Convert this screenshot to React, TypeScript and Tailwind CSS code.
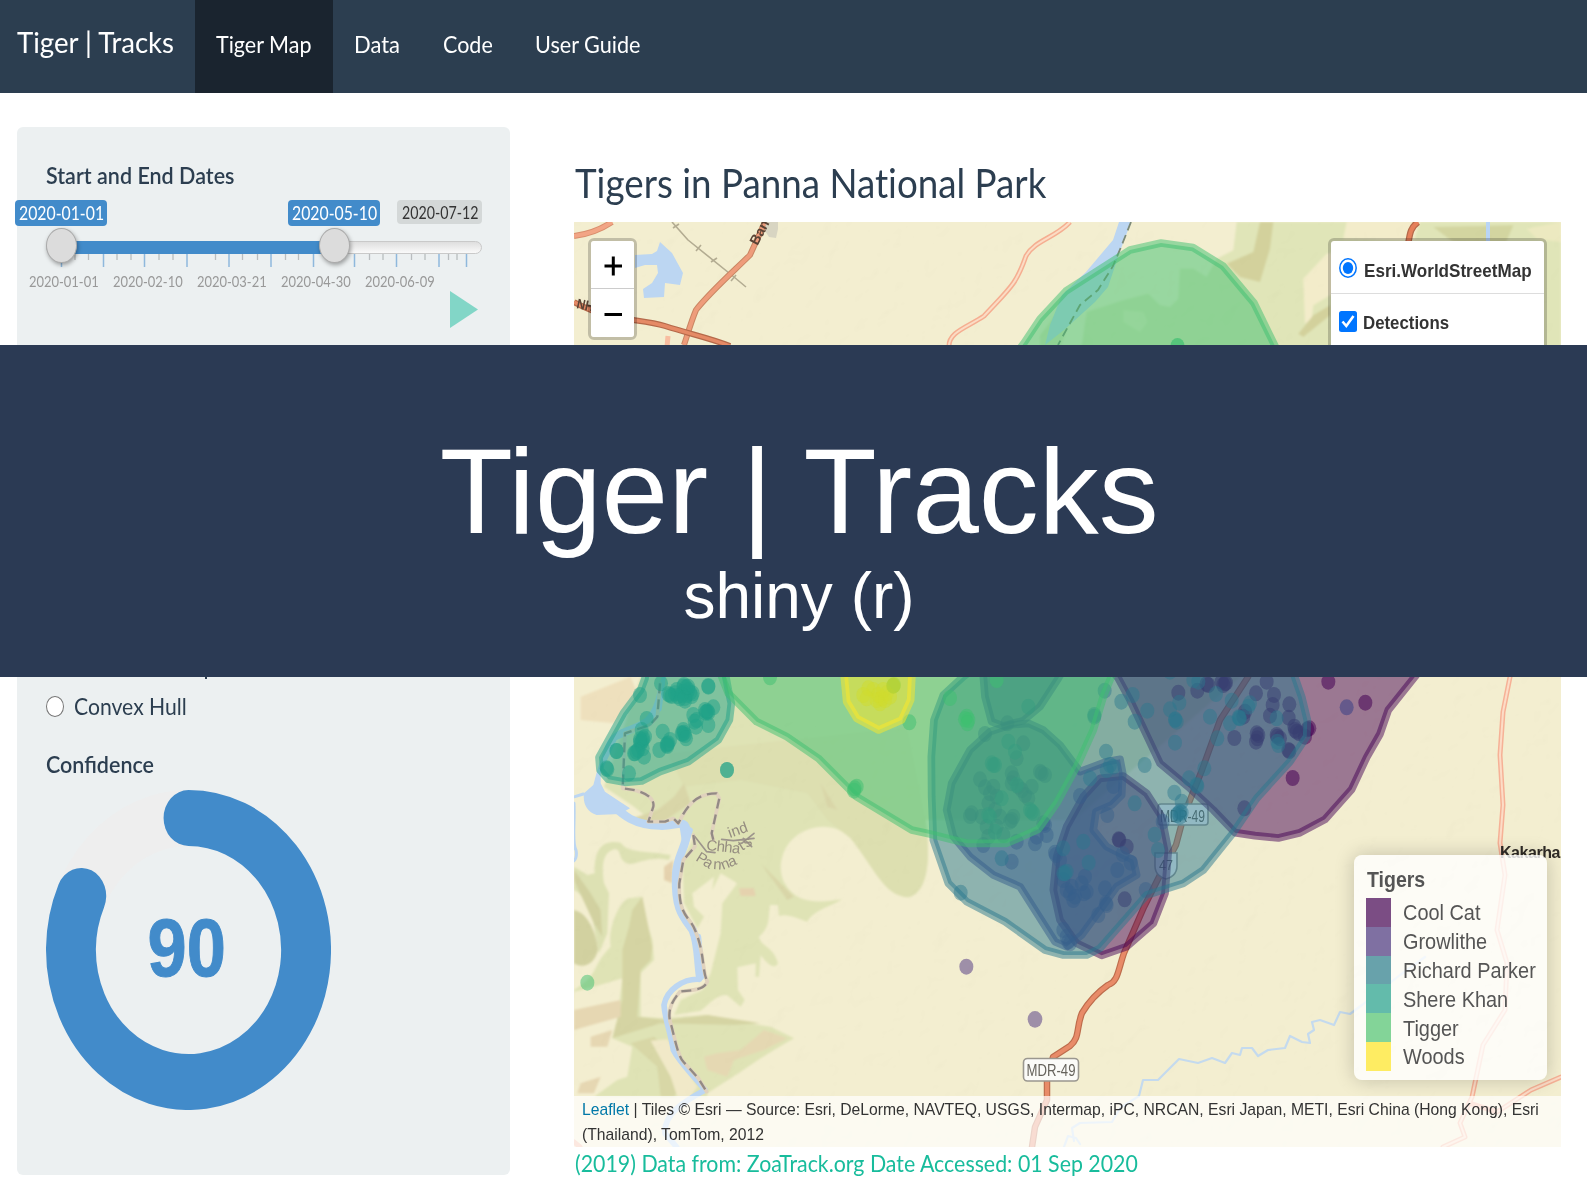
import React from "react";

const COOL = "#440154";
const GROW = "#414487";
const PARKER = "#2a788e";
const SHERE = "#1fa187";
const TIGGER = "#3dbf70";
const WOODS = "#fde725";

/* Narrowed text used across the dashboard */
function T({ children, className = "scale-x-[0.918]" }: { children: React.ReactNode; className?: string }) {
  return <span className={"inline-block origin-left whitespace-nowrap " + className}>{children}</span>;
}

function Zone({ c, pts }: { c: string; pts: string }) {
  return (
    <polygon
      points={pts}
      fill={c}
      fillOpacity={0.5}
      stroke={c}
      strokeOpacity={0.5}
      strokeWidth={23}
      strokeLinejoin="round"
    />
  );
}

function Dots({ c, pts, o = 0.5 }: { c: string; pts: number[][]; o?: number }) {
  return (
    <g fill={c} fillOpacity={o}>
      {pts.map(([x, y], i) => (
        <ellipse key={i} cx={x} cy={y} rx={21} ry={24} />
      ))}
    </g>
  );
}

const shereDots = [
  [-780, 75], [-717, 40], [-575, 48], [-575, 50], [-690, 75], [-670, 60], [-650, 50], [-640, 75], [-635, 60], [-660, 85], [-625, 78], [-645, 92], [-648, 45], [-685, 78], [-622, 70],
  [-675, 70], [-650, 65], [-630, 68], [-655, 75], [-642, 52], [-668, 78], [-646, 84], [-695, 72], [-636, 50],
  [-560, 112], [-580, 125], [-575, 128], [-585, 120], [-577, 124], [-583, 128], [-575, 165], [-620, 135], [-610, 150], [-650, 180], [-645, 195], [-655, 190], [-648, 188], [-652, 192], [-612, 170], [-642, 205], [-616, 155], [-712, 185], [-690, 210], [-700, 225], [-695, 220], [-698, 228], [-722, 240], [-698, 222],
  [-760, 147], [-775, 180], [-770, 205], [-780, 215], [-775, 215], [-772, 210], [-778, 222], [-795, 250], [-798, 250], [-785, 240], [-772, 235], [-768, 260], [-765, 200], [-780, 208], [-790, 245], [-850, 243], [-851, 243], [-880, 295], [-878, 298], [-813, 310], [-519, 300], [-519, 300],
];
const tiggerDots = [
  [-390, 22], [-136, 355], [-130, 350], [-138, 362], [28, 157], [200, 140], [205, 150], [195, 148], [202, 160], [150, 84], [290, 30], [-18, 45],
];
const parkerDots = [
  [583, 135], [583, 140], [614, 62], [618, 245], [664, 95], [698, 75], [704, 155], [742, 122], [734, 285], [570, 325], [630, 285], [640, 290], [620, 300], [825, 218], [825, 150], [826, 148], [830, 155], [810, 118], [838, 98],
  [867, 325], [890, 345], [892, 348], [823, 368], [845, 395], [840, 425], [835, 430], [830, 435], [845, 428], [840, 440], [704, 400], [764, 494], [774, 540], [182, 668], [913, 295], [952, 205], [930, 140],
  [948, 72], [995, 92], [990, 160], [1016, 142], [1020, 145], [1018, 144], [1045, 110], [1050, 100], [880, 30], [895, 35], [1130, 145], [1132, 215], [1135, 225], [810, 5], [490, 535], [550, 515], [566, 578], [305, 565], [385, 110],
  [325, 215], [345, 245], [285, 285], [275, 280], [280, 285], [390, 420], [395, 425], [400, 430], [265, 435], [270, 440], [350, 345], [305, 385], [285, 485], [490, 610], [495, 610], [500, 605],
];
const growDots = [
  [255, 192], [322, 160], [370, 220], [350, 265], [240, 328], [335, 310], [340, 325], [420, 305], [425, 310], [435, 315], [255, 352], [270, 370], [355, 350], [395, 350], [375, 375], [385, 385], [335, 340],
  [215, 430], [210, 438], [265, 400], [245, 440], [285, 420], [340, 440], [330, 455], [335, 450], [290, 470], [310, 495], [265, 500], [250, 525], [350, 515], [410, 500], [405, 520], [440, 495], [435, 465], [335, 575], [430, 460],
  [290, 380], [300, 440], [280, 350], [260, 470], [365, 360], [540, 378], [640, 348], [622, 435], [465, 548], [468, 555], [480, 570], [555, 620], [560, 665], [525, 680], [520, 690], [500, 660], [515, 650], [510, 670], [552, 670], [490, 630], [545, 640],
  [652, 600], [692, 578], [668, 552], [615, 655], [620, 705], [595, 735], [618, 700], [737, 660], [490, 780], [505, 815], [510, 820], [500, 800], [788, 455],
];
const coolDots = [
  [656, 508], [658, 510], [680, 530], [674, 688], [835, 68], [892, 62], [920, 42], [925, 45], [975, 40], [970, 45], [965, 35], [978, 38], [1003, 204], [1068, 70], [1122, 75], [1118, 105], [1100, 35], [1168, 103], [1110, 137], [1166, 143],
  [1030, 140], [1035, 125], [1070, 190], [1072, 205], [1075, 195], [1068, 215], [1130, 195], [1140, 205], [1132, 200], [1183, 170], [1190, 185], [1198, 190], [1185, 180], [1165, 240], [1168, 243], [1033, 415], [1228, 175], [1215, 200],
];

function MapArt() {
  return (
    <svg className="absolute inset-0 h-full w-full" viewBox="574 222 987 925" preserveAspectRatio="none">
      <defs>
        <filter id="soft" x="-10%" y="-10%" width="120%" height="120%">
          <feGaussianBlur stdDeviation="3" />
        </filter>
        <filter id="relief" x="0" y="0" width="100%" height="100%">
          <feTurbulence type="fractalNoise" baseFrequency="0.035" numOctaves="3" seed="4" result="n" />
          <feDiffuseLighting in="n" surfaceScale="1.6" lightingColor="#ffffff" diffuseConstant="1.35">
            <feDistantLight azimuth="225" elevation="48" />
          </feDiffuseLighting>
        </filter>
      </defs>
      <rect x="574" y="222" width="987" height="925" fill="#f3eed0" />

      {/* vegetation, north-east */}
      <g transform="translate(1060 222) scale(0.33333)" filter="url(#soft)">
        <path d="M530 0 L520 85 L470 110 L440 165 L400 140 L360 140 L355 230 L330 255 L300 250 L265 215 L190 235 L80 270 L65 370 L-60 380 L-60 340 L0 260 L60 200 L0 380 L1503 380 L1503 0 Z" fill="#e0e5b8" />
        <path d="M860 0 L1080 0 L1060 60 L830 90 L800 95 L730 170 L735 305 L755 290 L760 250 L810 220 L1200 200 L1200 60 L850 50 Z" fill="#f3ecca" />
        <path d="M600 0 L640 0 L630 80 L600 180 L540 165 L500 125 L580 90 Z M760 280 L810 250 L810 280 L730 345 L715 335 Z" fill="#d3d19c" />
        <path d="M1120 15 L1360 10 L1330 80 L1180 60 Z" fill="#d3d5a0" />
        <path d="M1400 20 L1503 0 L1503 60 L1430 50 Z" fill="#ece9c0" />
        <path d="M190 265 L250 270 L262 300 L240 330 L190 300 Z" fill="#ecebc4" />
      </g>

      {/* vegetation and relief, south */}
      <g transform="translate(574 760) scale(0.33333)" filter="url(#soft)">
        <path d="M200 -250 L2000 -250 L1500 180 L1055 180 C1070 290 1065 400 1000 412 C930 405 905 330 830 235 C770 170 650 200 625 290 C610 340 630 390 680 415 C720 430 760 425 805 418 C770 440 720 450 700 485 C670 475 640 460 615 468 L612 435 L588 435 C582 475 590 500 555 530 C560 560 600 560 612 610 C600 635 570 600 560 585 L555 650 L545 650 L545 610 L490 622 L492 690 L512 720 L500 740 L465 710 C440 690 400 740 380 752 L300 765 L320 720 L385 690 L410 640 L440 520 L445 430 L490 370 L440 340 L415 390 L420 350 L355 400 L360 440 L390 470 L370 505 L330 430 L325 300 L360 230 L300 180 L240 190 L180 140 L90 80 Z" fill="#dfe3b5" />
        <path d="M280 -20 L1000 -100 L1055 180 C1070 290 1065 400 1000 412 C930 405 905 330 830 235 L760 180 L700 100 L500 60 L330 80 Z" fill="#dddfb0" />
        <path d="M62 340 C60 260 90 240 140 248 C165 280 200 270 290 285 L285 300 C220 285 180 320 160 310 C130 300 145 265 120 268 C80 280 85 330 90 370 L105 400 L100 520 L75 580 L60 500 C50 430 20 400 0 390 L0 320 L40 345 Z" fill="#dde1b3" />
        <path d="M0 690 C80 640 50 620 110 560 C100 500 140 420 165 415 L205 410 L210 460 L235 540 L240 600 L200 640 L200 770 L265 775 L400 765 L520 790 L590 800 L660 835 L600 870 L560 895 L500 935 L400 1000 L400 1010 L60 1010 L130 960 L160 950 L175 860 L115 835 L130 780 L145 655 L60 680 L0 695 Z" fill="#dfe3b5" />
        <path d="M0 450 C50 460 70 540 72 570 C60 620 20 625 0 610 Z M0 330 L50 400 L80 450 L85 530 L60 490 L0 360 Z" fill="#d2d1a0" />
        <path d="M205 410 L235 560 L230 600 L200 630 L190 770 L280 780 L400 765 L560 790 L480 795 L260 790 L115 835 L145 720 L145 570 L165 500 L175 450 Z" fill="#d5d4a3" />
        <path d="M240 830 L290 880 L330 960 L300 1010 L260 1010 L250 920 L170 850 Z" fill="#d8d7a6" />
        <path d="M230 842 L280 838 L320 900 L370 980 L350 1010 L310 1010 L290 950 Z" fill="#f1e9c8" />
        <path d="M0 750 L140 720 L140 770 L0 810 Z M50 830 L115 810 L100 860 L50 860 Z M20 970 L80 950 L60 1000 L10 1000 Z" fill="#e6d7b2" />
        <path d="M390 890 L430 880 L500 870 L570 810 L640 835 L570 870 L480 900 L460 950 L400 930 Z" fill="#e5d8b2" />
        <path d="M270 320 L298 300 L295 370 L270 360 Z M495 385 L540 385 L545 408 L500 408 Z M200 180 L240 180 L240 200 L210 195 Z" fill="#e5d2ae" />
        <path d="M160 180 L250 150 L300 110 L330 70 L350 130 L260 190 Z M740 70 L790 150 L760 140 Z M560 310 L660 410 L640 420 Z" fill="#d9d6a8" />
        <path d="M20 -190 L170 -250 L190 -200 L120 -110 L20 -120 Z" fill="#eee0bd" />
      </g>
      <rect x="574" y="222" width="987" height="925" filter="url(#relief)" style={{ mixBlendMode: "multiply" }} opacity=".12" />

      {/* northern features */}
      <g fill="none" strokeLinejoin="round">
        <path d="M635 255 L652 254 L657 251 L660 242 L672 253 L683 273 L680 285 L665 283 L664 297 L644 298 L643 289 L652 283 L658 273 L657 265 L645 265 L635 268 Z" fill="#bcd6f2" />
        <path d="M1119 222 L1131 222 L1119 254 L1108 287 L1095 302 L1064 330 L1045 345 L1050 325 L1062 295 L1086 272 L1113 240 Z" fill="#bcd6f2" />
        <path d="M1131 222 L1121 247 L1113 266 L1098 290 L1080 305 L1058 345" stroke="#7d8a78" strokeWidth="1.8" strokeDasharray="9 5" />
        <path d="M672 222 L688 240 L734 277 L746 287" stroke="#b3ac92" strokeWidth="1.6" />
        <path d="M673 228 l6 -4 M696 251 l5 -6 M711 262 l6 -4 M731 281 l5 -6" stroke="#b3ac92" strokeWidth="1.6" />
        <path d="M574 236 C590 234 600 230 612 222" stroke="#d98e6c" strokeWidth="6" />
        <path d="M574 236 C590 234 600 230 612 222" stroke="#f2a585" strokeWidth="4" />
        <path d="M765 222 L750 255 C735 270 710 292 696 310 C691 322 688 333 684 345" stroke="#c98663" strokeWidth="6" />
        <path d="M765 222 L750 255 C735 270 710 292 696 310 C691 322 688 333 684 345" stroke="#ee9c7b" strokeWidth="4" />
        <path d="M574 302 C610 322 640 318 665 326 C690 334 710 338 730 346" stroke="#b5694a" strokeWidth="6" />
        <path d="M574 302 C610 322 640 318 665 326 C690 334 710 338 730 346" stroke="#e58a66" strokeWidth="3.5" />
        <path d="M668 336 L667 347" stroke="#f8bda0" strokeWidth="5" />
        <path d="M1070 222 C1055 238 1035 240 1026 256 C1016 285 1010 288 984 316 C968 327 948 332 949 347" stroke="#f5ae91" strokeWidth="5" />
        <path d="M1070 222 C1055 238 1035 240 1026 256 C1016 285 1010 288 984 316 C968 327 948 332 949 347" stroke="#fbdcc4" strokeWidth="2" />
        <path d="M1418 222 C1411 227 1410 232 1408 245" stroke="#b5694a" strokeWidth="6.5" />
        <path d="M1418 222 C1411 227 1410 232 1408 245" stroke="#e5805a" strokeWidth="4" />
        <path d="M1488 222 V245" stroke="#b9d5f5" strokeWidth="4" />
      </g>
      <path d="M766 222 h12 v7 l-2 9 l-7 -1 l-4 -6 Z" fill="#d8d5c2" />
      <text transform="translate(757.5 246) rotate(-62)" fontFamily="Liberation Sans, sans-serif" fontWeight="700" fontSize="14" fill="#5a4335" textLength="26" lengthAdjust="spacingAndGlyphs">Ban</text>
      <text transform="translate(576 308) rotate(12)" fontFamily="Liberation Sans, sans-serif" fontWeight="700" fontSize="14" fill="#5a4335" textLength="17" lengthAdjust="spacingAndGlyphs">NH</text>

      {/* southern rivers, rail line and roads */}
      <g fill="none" strokeLinejoin="round" strokeLinecap="round">
        <g transform="translate(570 670) scale(0.33333)">
          <path d="M285 0 C255 60 265 105 225 145 C170 180 130 170 105 230 L82 300 L70 345 L42 370 C38 400 50 425 80 435 L150 432 L180 415 L150 395 L105 365 L92 340 L92 310 L140 210 L230 170 L275 120 L290 0 Z" fill="#bcd6f2" />
          <path d="M110 390 C150 425 180 465 270 467 C320 470 350 440 350 490 C350 530 318 560 318 620 C315 720 340 740 368 780 C385 820 382 860 390 920" stroke="#bcd6f2" strokeWidth="25" />
          <path d="M335 465 L362 480 L345 530 Z" fill="#bcd6f2" stroke="#bcd6f2" strokeWidth="14" />
          <path d="M385 800 C395 870 385 900 388 928 C340 925 290 960 282 1005 C285 1050 300 1080 310 1140 C330 1180 370 1215 405 1260 C350 1290 280 1330 285 1390 L320 1431" stroke="#bcd6f2" strokeWidth="17" />
          <path d="M15 380 L40 372 M12 400 C15 460 5 520 18 540 C22 560 15 570 12 572" stroke="#bcd6f2" strokeWidth="9" />
          <path d="M270 40 L262 140 L240 165 L165 190 L158 355 C215 360 255 380 250 410 L235 455 L285 455 L310 445 L325 460 C345 420 370 370 440 370 L448 385 L425 490 L430 510 M370 495 L375 530 L340 570 L328 640 C325 740 360 740 375 780 C405 850 395 900 412 935 C400 965 350 960 330 965 C300 1000 290 1030 305 1070 C315 1110 325 1160 340 1175 L385 1225 L410 1265" stroke="#e0d2bd" strokeWidth="11" />
          <path d="M270 40 L262 140 L240 165 L165 190 L158 355 C215 360 255 380 250 410 L235 455 L285 455 L310 445 L325 460 C345 420 370 370 440 370 L448 385 L425 490 L430 510 M370 495 L375 530 L340 570 L328 640 C325 740 360 740 375 780 C405 850 395 900 412 935 C400 965 350 960 330 965 C300 1000 290 1030 305 1070 C315 1110 325 1160 340 1175 L385 1225 L410 1265" stroke="#928a85" strokeWidth="7" strokeDasharray="30 18" strokeLinecap="butt" />
          <path d="M375 500 L410 545 L435 548 M455 508 L490 512 L552 505 M515 520 L552 490 M520 505 L545 530" stroke="#9d958c" strokeWidth="5" />
        </g>
        <path d="M1064 1147 L1068 1136 L1076 1138 L1080 1144 M1074 1141 L1072 1128 L1080 1123 L1112 1122 L1120 1108 L1139 1096 L1143 1080 L1158 1080 L1179 1059 L1198 1063 L1212 1058 L1225 1063 L1232 1053 L1240 1055 L1242 1048 L1252 1048 L1258 1056 L1268 1050 L1285 1048 L1290 1036 L1302 1042 L1310 1043 L1308 1034 L1314 1030 L1312 1022 L1320 1020 L1334 1025 L1340 1012 L1350 1014 L1362 1005 L1400 975 L1425 957" stroke="#c4daee" strokeWidth="2.2" />
        <g stroke="#f6b196" strokeWidth="5">
          <path d="M1510 677 L1503 712 L1500 755 L1503 805 L1500 843 L1505 875 L1497 930 L1507 963 L1505 1010 L1483 1045 L1472 1097 L1460 1123 L1465 1137 L1443 1147 M1561 1077 L1531 1090 L1497 1112 L1472 1104 M574 1142 L580 1147" />
        </g>
        <path d="M1510 677 L1503 712 L1500 755 L1503 805 L1500 843 L1505 875 L1497 930 L1507 963 L1505 1010 L1483 1045 L1472 1097 L1460 1123 L1465 1137 L1443 1147 M1561 1077 L1531 1090 L1497 1112" stroke="#fcdcc6" strokeWidth="2" />
        <path d="M1248 677 L1220 720 L1202 770 L1184 815 L1176 845 L1160 875 L1144 907 L1124 953 C1118 970 1118 982 1108 985 C1098 992 1088 1003 1082 1013 C1076 1028 1080 1038 1070 1046 L1053 1057 L1047 1080 L1047 1100 L1035 1127 L1032 1147" stroke="#bd6c4c" strokeWidth="6.5" />
        <path d="M1248 677 L1220 720 L1202 770 L1184 815 L1176 845 L1160 875 L1144 907 L1124 953 C1118 970 1118 982 1108 985 C1098 992 1088 1003 1082 1013 C1076 1028 1080 1038 1070 1046 L1053 1057 L1047 1080 L1047 1100 L1035 1127 L1032 1147" stroke="#e88b68" strokeWidth="4.2" />
      </g>

      {/* labels and shields */}
      <g fontFamily="Liberation Sans, sans-serif">
        <g fill="#958d80" fontSize="15">
          <text transform="translate(730 838) rotate(-20)" textLength="20">ind</text>
          <text transform="translate(706 850) rotate(6)" textLength="34">Chha</text>
          <text transform="translate(742 851) rotate(-32)" textLength="13">ts</text>
          <text transform="translate(695 860) rotate(32)" textLength="17">Pa</text>
          <text transform="translate(713 869) rotate(4)">n</text>
          <text transform="translate(723 870) rotate(-22)" textLength="16">na</text>
        </g>
        <text x="1500" y="857.5" fontSize="16" fontWeight="700" fill="#2f2b26" textLength="60.5">Kakarha</text>
        <g strokeWidth="1.6" stroke="#9a978f" fill="#fbfbf8">
          <rect x="1158" y="804" width="50" height="21" rx="3" />
          <rect x="1023.5" y="1058.5" width="55" height="22.5" rx="4" />
          <path d="M1155 853 h22 v13 c0 8 -6 12 -11 13 c-5 -1 -11 -5 -11 -13 Z" />
        </g>
        <g fill="#66635c" fontSize="16.5">
          <text x="1160" y="821.5" textLength="45" lengthAdjust="spacingAndGlyphs">MDR-49</text>
          <text x="1026.5" y="1076" textLength="49" lengthAdjust="spacingAndGlyphs">MDR-49</text>
          <text x="1159" y="870" fontSize="14" textLength="14" lengthAdjust="spacingAndGlyphs">47</text>
        </g>
      </g>

      {/* home ranges and detections */}
      <g transform="translate(900 670) scale(0.33333)">
        <Zone c={COOL} pts="600,-40 655,25 690,90 780,280 870,355 940,420 1005,488 1065,497 1135,504 1200,488 1275,448 1355,358 1400,262 1440,192 1465,120 1545,20 1590,-40" />
        <Zone c={COOL} pts="600,325 670,318 740,370 785,440 805,540 795,670 760,760 680,830 605,856 530,820 480,750 460,660 470,560 500,470 550,380" />
        <Dots c={COOL} pts={coolDots} />
        <Dots c={COOL} o={0.55} pts={[[1285, 35], [1396, 98], [1178, 324], [1222, 178]]} />
        <Dots c={GROW} o={0.6} pts={[[1340, 112]]} />
        <Zone c={GROW} pts="385,160 430,180 480,225 540,305 620,275 660,268 668,310 665,375 635,405 588,425 580,480 620,530 700,570 710,615 650,650 600,720 545,795 500,830 465,815 360,650 280,615 210,560 160,500 140,420 155,340 210,240 270,185 330,165" />
        <Zone c={GROW} pts="245,-40 255,80 275,155 310,168 370,152 420,110 475,25 520,-50" />
        <Dots c={GROW} pts={growDots} o={0.42} />
        <Zone c={PARKER} pts="260,-30 190,20 130,75 102,150 94,260 95,380 100,510 145,640 200,695 315,755 435,840 490,855 560,855 600,835 740,675 850,640 910,600 1000,488 1070,385 1170,275 1220,200 1222,150 1205,80 1170,-20" />
        <Dots c={PARKER} pts={parkerDots} o={0.45} />
        <Zone c={SHERE} pts="-760,-30 -765,25 -778,60 -830,130 -903,262 -900,300 -875,328 -825,337 -775,333 -720,305 -635,275 -545,210 -512,150 -506,100 -515,60 -530,-20" />
        <Dots c={SHERE} pts={shereDots} />
        <Zone c={TIGGER} pts="-545,-40 -535,20 -515,70 -430,155 -340,200 -245,265 -130,380 35,480 90,492 200,520 320,520 415,478 470,400 530,290 580,180 610,80 650,-20" />
        <Dots c={TIGGER} pts={tiggerDots} />
        <Zone c={WOODS} pts="-172,-30 -160,95 -130,145 -64,180 5,150 32,90 38,-30" />
        <Dots c="#d0dc2e" pts={[[-80, 60], [-70, 90], [-55, 85], [-40, 70], [-95, 55], [-60, 100], [-45, 90], [-110, 75], [-65, 75], [-30, 80], [-50, 60], [-100, 85]]} o={0.5} />
        <Dots c="#b4d234" pts={[[-20, 47]]} o={0.8} />
        <g fill="#49307f" fillOpacity=".5">
          <ellipse cx="199" cy="890" rx="21" ry="24" />
          <ellipse cx="405" cy="1048" rx="22" ry="25" />
        </g>
        <ellipse cx="-938" cy="938" rx="21" ry="24" fill={TIGGER} fillOpacity=".5" />
      </g>
      <polygon points="1000,375 1024,343 1040,319 1066,291 1130,250 1161,243 1193,247.5 1223,266 1254,303 1277,350 1280,380" fill={TIGGER} fillOpacity=".5" stroke={TIGGER} strokeOpacity=".5" strokeWidth="7.5" strokeLinejoin="round" />
      <ellipse cx="1177.5" cy="346" rx="7" ry="8" fill={TIGGER} fillOpacity=".7" />
    </svg>
  );
}

const bigTicks = [61.5, 103.5, 144.5, 187, 229, 271, 313.5, 354.5, 396.5, 439, 466.5];
const smallTicks = [75, 88.5, 117, 131, 159, 173, 215.5, 242.5, 257.5, 285.5, 298.5, 327, 341, 369.5, 383, 411.5, 425, 448.5, 457];
const tickLabels: [string, string][] = [
  ["2020-01-01", "left-[-17px]"],
  ["2020-02-10", "left-[67px]"],
  ["2020-03-21", "left-[151px]"],
  ["2020-04-30", "left-[235px]"],
  ["2020-06-09", "left-[319px]"],
];

/* Date range slider; child positions are offsets along the track */
function Slider() {
  const badge = "absolute top-[13px] flex h-[26px] w-[92px] items-center rounded bg-[#428bca] pl-[3.5px] text-[18.6px] text-white";
  const knob = "absolute top-[41px] h-[35px] w-[31px] rounded-[50%] border border-[#ababab] bg-[#dcdcdc] shadow-[1px_2px_4px_rgba(0,0,0,0.35)]";
  return (
    <div className="relative h-[158px] w-[436px]">
      <div className={badge + " left-[-31px]"}><T className="scale-x-[0.85]">2020-01-01</T></div>
      <div className={badge + " left-[242px]"}><T className="scale-x-[0.85]">2020-05-10</T></div>
      <div className="absolute left-[351px] top-[13px] flex h-6 w-[85px] items-center rounded bg-[#d4d8d8] pl-[4.5px] text-[17px] text-[#333]"><T className="translate-y-px scale-x-[0.835]">2020-07-12</T></div>
      <div className="absolute left-0 top-[54px] h-[13px] w-[436px] rounded-lg border border-[#c9c9c9] bg-linear-to-b from-[#dedede] to-[#fafafa]" />
      <div className="absolute left-[15px] top-[54px] h-[13px] w-[274px] bg-[#428bca]" />
      <svg className="absolute left-0 top-[67px] h-[14px] w-[436px]" viewBox="46 0 436 14">
        {bigTicks.map((x) => <path key={x} d={`M${x} 0V13`} stroke="#8fb8dc" strokeWidth="1.5" />)}
        {smallTicks.map((x) => <path key={x} d={`M${x} 0V6`} stroke="#b9bdbf" strokeWidth="1.3" />)}
      </svg>
      <div className={knob + " left-0"} />
      <div className={knob + " left-[272.5px]"} />
      {tickLabels.map(([t, pos]) => (
        <div key={t} className={"absolute top-[85px] text-[15.5px] leading-[18px] text-[#999] " + pos}><T className="scale-x-[0.835]">{t}</T></div>
      ))}
      <svg className="absolute left-[404px] top-[104px] h-[37px] w-[28px]" viewBox="0 0 28 37"><path d="M0 0L28 18.5L0 37Z" fill="#82d6c7" /></svg>
    </div>
  );
}

function Gauge() {
  return (
    <svg className="h-[320px] w-[285px]" viewBox="0 0 320 320" preserveAspectRatio="none">
      <circle cx="160" cy="160" r="132" fill="none" stroke="#eeeeee" strokeWidth="56" />
      <path d="M160 28 A132 132 0 1 1 39.6 105.9" fill="none" stroke="#428bca" strokeWidth="56" strokeLinecap="round" />
      <text x="158" y="186.5" textAnchor="middle" fontFamily="Liberation Sans, sans-serif" fontWeight="700" fontSize="82" fill="#428bca" stroke="#428bca" strokeWidth="1" textLength="88" lengthAdjust="spacingAndGlyphs">90</text>
    </svg>
  );
}

const legend: [string, string][] = [
  ["Cool Cat", "bg-[#7b4d84]"],
  ["Growlithe", "bg-[#7f70a2]"],
  ["Richard Parker", "bg-[#68a2ab]"],
  ["Shere Khan", "bg-[#63bbab]"],
  ["Tigger", "bg-[#83d498]"],
  ["Woods", "bg-[#feec62]"],
];

export default function App() {
  const nav = "h-[93px] pl-[21px] text-[23.25px] leading-[88px]";
  return (
    <div className="relative h-[1190px] w-[1587px] overflow-hidden bg-white font-['Lato',sans-serif] text-[#2c3e50]">
      <nav className="flex h-[93px] bg-[#2c3e50] text-white">
        <div className="w-[195px] pl-[16.5px] text-[29.4px] leading-[84px]"><T className="scale-x-[0.938]">Tiger | Tracks</T></div>
        <div className={nav + " w-[138px] bg-[#1a242f]"}><T className="scale-x-[0.925]">Tiger Map</T></div>
        <div className={nav + " w-[89px]"}><T className="scale-x-[0.945]">Data</T></div>
        <div className={nav + " w-[92px]"}><T className="scale-x-[0.925]">Code</T></div>
        <div className={nav + " w-[150px]"}><T className="scale-x-[0.93]">User Guide</T></div>
      </nav>

      <div className="flex items-start">
        <aside className="ml-[17px] mt-[34px] flex h-[1048px] w-[493px] shrink-0 flex-col rounded-md bg-[#ecf0f1] pl-[29px] pt-9 text-[23.25px] leading-6">
          <div className="-ml-[0.5px] h-6 font-semibold"><T className="scale-x-[0.925]">Start and End Dates</T></div>
          <Slider />
          <div className="flex h-[349px] items-end pb-[15px] pl-[159px]"><span className="h-[2px] w-[2px] bg-[#2c3e50]" /></div>
          <div className="flex h-6 items-center gap-[10px]">
            <span className="h-[21px] w-[18px] rounded-[50%] border border-[#767676] bg-white" />
            <T className="scale-x-[0.91]">Convex Hull</T>
          </div>
          <div className="mt-[34px] h-6 font-semibold"><T className="scale-x-[0.925]">Confidence</T></div>
          <div className="mt-[14px]"><Gauge /></div>
        </aside>

        <main className="ml-16 mt-[68px] w-[987px]">
          <h3 className="h-[61px] pl-px text-[40.3px] leading-[44px] [font-variant-ligatures:none]"><T className="scale-x-[0.912]">Tigers in Panna National Park</T></h3>
          <div className="relative h-[925px] w-[987px] overflow-hidden font-['Liberation_Sans',sans-serif]">
            <MapArt />
            <div className="absolute left-[14px] top-4 h-[102px] w-[49px] rounded-md border-[3px] border-black/20 bg-clip-padding">
              <svg className="h-full w-full rounded-[3px] bg-white" viewBox="0 0 43 96" preserveAspectRatio="none" aria-label="Zoom">
                <path d="M0 47.5H43" stroke="#ccc" />
                <path d="M13.5 25H31M22.3 15.5V34.5M13.5 73.5H31" stroke="#000" strokeWidth="3" />
              </svg>
            </div>
            <div className="absolute left-[754px] top-4 h-[200px] w-[219px] rounded-md border-[3px] border-black/20 bg-white bg-clip-padding text-[18.6px] font-bold text-[#333]">
              <div className="flex h-[53px] items-center gap-[6px] border-b border-[#ddd] pl-2">
                <svg className="h-[20px] w-[18px] shrink-0 translate-y-px" viewBox="0 0 18 20" preserveAspectRatio="none">
                  <ellipse cx="9" cy="10" rx="8.2" ry="9.2" fill="#fff" stroke="#0075ff" strokeWidth="1.5" />
                  <ellipse cx="9" cy="10" rx="5.2" ry="5.9" fill="#0075ff" />
                </svg>
                <div className="w-[167px] pl-[0.5px]"><T className="translate-y-[3.5px] scale-x-[0.918]">Esri.WorldStreetMap</T></div>
              </div>
              <div className="flex h-[54px] items-center gap-[6px] pl-2">
                <svg className="h-[21px] w-[18px]" viewBox="0 0 18 21">
                  <rect width="18" height="21" rx="2.5" fill="#0075ff" />
                  <path d="M3.5 10.5L7.3 15L14.5 5" fill="none" stroke="#fff" strokeWidth="2.6" />
                </svg>
                <T className="translate-y-[1.5px] scale-x-[0.905]">Detections</T>
              </div>
            </div>
            <div className="absolute left-[780px] top-[633px] h-[225px] w-[193px] rounded-lg bg-white/80 pl-3 pt-[13px] text-[21.7px] text-[#555] shadow-[0_0_20px_rgba(0,0,0,0.2)]">
              <div className="h-[30px] pl-[0.5px] leading-6 font-bold"><T className="scale-x-[0.9]">Tigers</T></div>
              {legend.map(([name, c]) => (
                <div key={name} className="flex h-[28.8px] items-center gap-3 leading-7">
                  <span className={"h-[28.8px] w-[25px] shrink-0 " + c} />
                  <T className="translate-y-px scale-x-[0.918]">{name}</T>
                </div>
              ))}
            </div>
            <div className="absolute bottom-0 left-0 h-[51px] w-full bg-white/70 pl-[7.5px] text-[17px] leading-[25.6px] text-[#333]">
              <div className="translate-y-px"><T className="scale-x-[0.9235]"><span className="text-[#0078a8]">Leaflet</span> | Tiles © Esri — Source: Esri, DeLorme, NAVTEQ, USGS, Intermap, iPC, NRCAN, Esri Japan, METI, Esri China (Hong Kong), Esri</T></div>
              <div><T className="scale-x-[0.923]">(Thailand), TomTom, 2012</T></div>
            </div>
          </div>
          <div className="h-[34px] pl-px text-[23.25px] leading-[33px] text-[#18bc9c]"><T>(2019) Data from: ZoaTrack.org Date Accessed: 01 Sep 2020</T></div>
        </main>
      </div>

      {/* Project title banner laid over the dashboard */}
      <div className="absolute left-0 top-[345px] flex h-[332px] w-full flex-col items-center bg-[#2b3a54] pl-[11px] pt-[86px] font-['Liberation_Sans',sans-serif] text-white">
        <h1 className="scale-x-[0.99] text-[121px] leading-[121px]">Tiger | Tracks</h1>
        <p className="mt-3 text-[64px] leading-[64px]">shiny (r)</p>
      </div>
    </div>
  );
}
